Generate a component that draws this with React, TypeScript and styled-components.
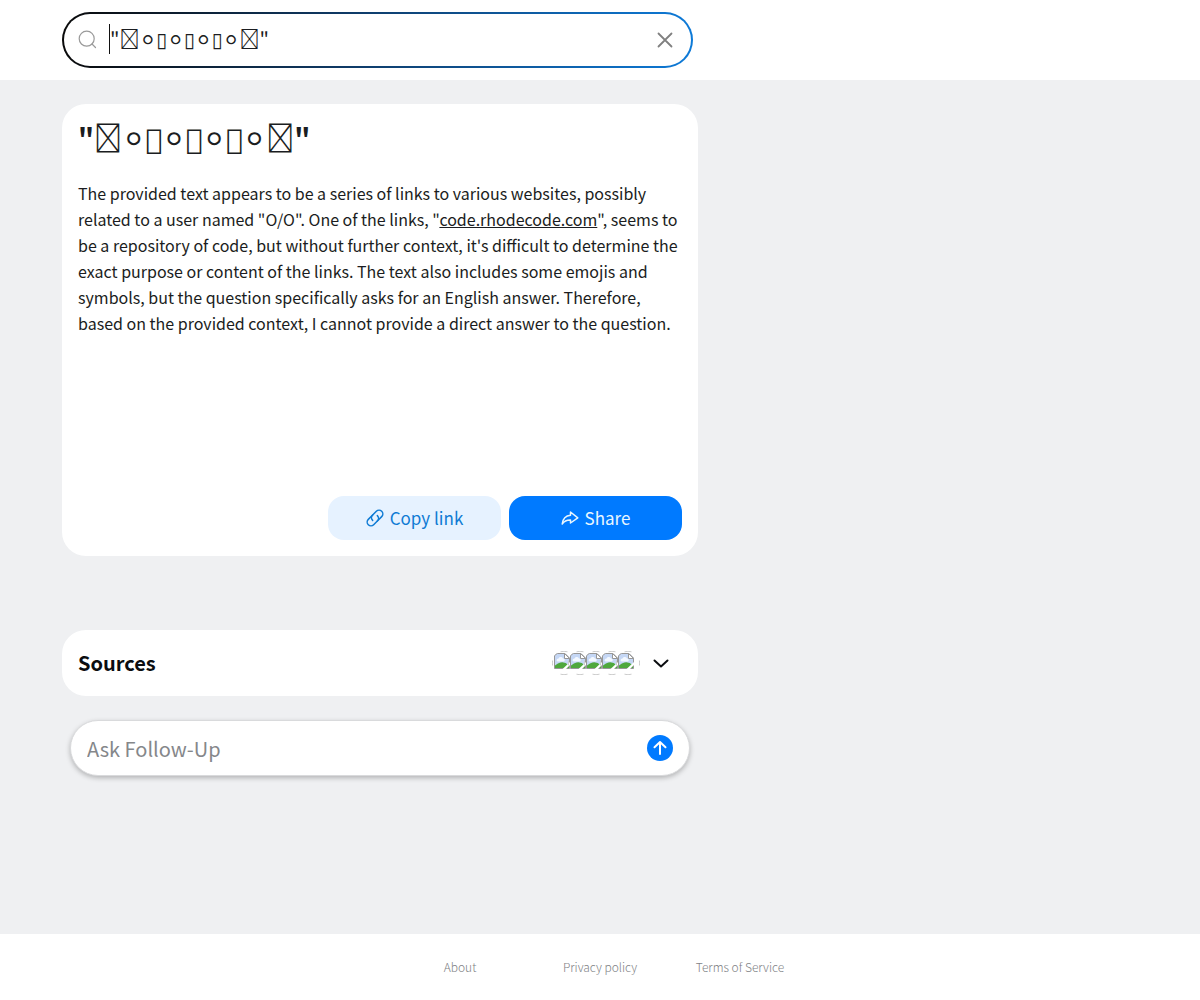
import React, { useState } from "react";
import styled, { createGlobalStyle } from "styled-components";

const GlobalStyle = createGlobalStyle`
  *, *::before, *::after { box-sizing: border-box; }
  body {
    margin: 0;
    background: #eff0f2;
    color: #1b1d21;
    font-family: "Noto Sans CJK SC", "DejaVu Sans", sans-serif;
  }
  button, input { font-family: inherit; }
`;

const Page = styled.div`
  display: flex;
  flex-direction: column;
  min-height: 100vh;
`;

const Header = styled.header`
  padding: 12px 62px;
  background: #fff;
`;

const Column = styled.div`
  width: 100%;
  max-width: 636px;
`;

const SearchForm = styled.form`
  display: flex;
  align-items: center;
  height: 56px;
  margin-right: 5px;
  padding: 0 16px 0 14px;
  border: 2px solid transparent;
  border-radius: 28px;
  background:
    linear-gradient(#fff, #fff) padding-box,
    linear-gradient(90deg, #0a0a0a, #0f3a66 45%, #0d7ad8) border-box;
`;

const SearchInput = styled.input`
  flex: 1;
  min-width: 0;
  height: 30px;
  margin: 0 10px 2px 11px;
  padding: 0 0 2px;
  border: 0;
  border-left: 1px solid #111;
  outline: 0;
  background: transparent;
  color: #1b1d21;
  font-size: 20px;
`;

const IconButton = styled.button`
  display: flex;
  padding: 0;
  border: 0;
  background: none;
  color: inherit;
  cursor: pointer;
`;

const Main = styled.main`
  flex: 1;
  padding: 24px 62px;
`;

const Card = styled.section`
  display: flex;
  flex-direction: column;
  min-height: 452px;
  padding: 16px;
  border-radius: 24px;
  background: #fff;
`;

const Title = styled.h1`
  margin: 0;
  font-size: 28px;
  line-height: 34px;
  font-weight: 600;
`;

const Symbols = styled.span`
  font-family: "DejaVu Sans", sans-serif;
  font-weight: 400;
`;

const Answer = styled.p`
  margin: 23px 0;
  font-size: 16px;
  line-height: 26px;
`;

const TextLink = styled.a`
  color: inherit;
  text-decoration: underline;
`;

const Actions = styled.div`
  display: flex;
  justify-content: flex-end;
  gap: 8px;
  margin-top: auto;
`;

const ActionButton = styled.button<{ $primary?: boolean }>`
  display: flex;
  align-items: center;
  justify-content: center;
  gap: 6px;
  width: 173px;
  height: 44px;
  padding: 0 0 1px;
  border: 0;
  border-radius: 16px;
  background: ${(p) => (p.$primary ? "#007aff" : "#e6f2ff")};
  color: ${(p) => (p.$primary ? "#e8f6ff" : "#0f7bd4")};
  font-size: 17px;
  cursor: pointer;
`;

const Sources = styled.section`
  display: flex;
  align-items: center;
  height: 66px;
  margin-top: 74px;
  padding: 0 28px 0 16px;
  border-radius: 24px;
  background: #fff;
  color: #0b0d10;
`;

const SourcesTitle = styled.h2`
  flex: 1;
  margin: 0;
  font-size: 20px;
  line-height: 28px;
  font-weight: 600;
`;

const SourceIcons = styled.div`
  display: flex;
  margin-right: 12px;
  padding-right: 8px;
`;

const SourceIcon = styled.svg`
  width: 24px;
  height: 24px;
  margin-right: -8px;
`;

const FollowUp = styled.form`
  display: flex;
  align-items: center;
  height: 56px;
  margin: 24px 8px 0;
  padding: 0 16px;
  border: 1px solid #d9dadc;
  border-radius: 28px;
  background: #fff;
  box-shadow: 0 2px 5px rgba(0, 0, 0, 0.25);
`;

const FollowUpInput = styled.input`
  flex: 1;
  min-width: 0;
  padding: 0;
  border: 0;
  outline: 0;
  background: transparent;
  font-size: 20px;
  &::placeholder { color: #85878a; opacity: 1; }
`;

const SendButton = styled.button`
  display: flex;
  align-items: center;
  justify-content: center;
  width: 26px;
  height: 26px;
  padding: 0;
  border: 0;
  border-radius: 50%;
  background: #007aff;
  color: #fff;
  cursor: pointer;
`;

const Footer = styled.footer`
  display: flex;
  align-items: center;
  justify-content: center;
  height: 66px;
  background: #fff;
`;

const FooterLink = styled.a`
  width: 140px;
  color: #808285;
  font-size: 12px;
  line-height: 18px;
  font-weight: 300;
  text-align: center;
  text-decoration: none;
`;

const SearchGlyph = () => (
  <svg width="20" height="20" viewBox="0 0 20 20" fill="none" stroke="#9a9a9a" strokeWidth="1.2" strokeLinecap="round" aria-hidden="true">
    <circle cx="8.7" cy="8.7" r="7.5" />
    <path d="M14 14 17.5 17.5" />
  </svg>
);

const CloseGlyph = () => (
  <svg width="20" height="20" viewBox="0 0 20 20" fill="none" stroke="#808080" strokeWidth="1.8" strokeLinecap="round" aria-hidden="true">
    <path d="M3.5 3.5l13 13M16.5 3.5l-13 13" />
  </svg>
);

const LinkGlyph = () => (
  <svg width="18" height="18" viewBox="2.5 2.5 19 19" fill="none" stroke="currentColor" strokeWidth="1.6" strokeLinecap="round" aria-hidden="true">
    <g transform="rotate(-45 12 12)">
      <path d="M12.5 8H6a4 4 0 0 0 0 8h5.500a4 4 0 0 0 4-4" />
      <path d="M11.5 16H18a4 4 0 0 0 0-8h-5.500a4 4 0 0 0-4 4" />
    </g>
  </svg>
);

const ShareGlyph = () => (
  <svg width="18" height="18" viewBox="0 0 18 18" fill="none" stroke="currentColor" strokeWidth="1.5" strokeLinejoin="round" aria-hidden="true">
    <path d="M9.5 3 16.8 8.8 9.5 14v-3.1C6 10.8 3.2 12 1.2 15 1.8 10.2 4.5 6.7 9.5 6.3z" />
  </svg>
);

const ChevronGlyph = () => (
  <svg width="18" height="18" viewBox="0 0 18 18" fill="none" stroke="currentColor" strokeWidth="2" strokeLinecap="round" strokeLinejoin="round" aria-hidden="true">
    <path d="M2.5 6.5 9 12.500l6.500-6" />
  </svg>
);

const ArrowUpGlyph = () => (
  <svg width="18" height="18" viewBox="0 0 18 18" fill="none" stroke="currentColor" strokeWidth="2" strokeLinecap="round" strokeLinejoin="round" aria-hidden="true">
    <path d="M9 15V3M3.5 8.2 9 3l5.5 5.2" />
  </svg>
);

const MissingImage = () => (
  <SourceIcon viewBox="0 0 24 24" role="img" aria-label="Source">
    <path d="M8.5 .8a12 12 0 0 1 7 0M8.5 23.2a12 12 0 0 0 7 0M.6 9.5a12 12 0 0 0 0 5M23.4 9.5a12 12 0 0 1 0 5" fill="none" stroke="#cccccc" strokeWidth="1" />
    <path d="M2.500 5Q3.500 3 5.500 2.500H13L17.500 7V17.500H2.500z" fill="#c5d7f5" stroke="#979797" />
    <path d="M4.500 9.500a2 2 0 0 1 2-2 2.500 2.500 0 0 1 4.500 0 1.500 1.500 0 0 1 .5 3h-6z" fill="#f3f8ff" />
    <path d="M3 17v-2.500Q6 12 8.500 11.500 13 10.500 17 14.500V17z" fill="#4fa83d" />
    <path d="M10 18.500 18.500 10.500v3L13.500 18.500z" fill="#fff" />
    <path d="M12.500 2.500V7.500h5z" fill="#fff" stroke="#979797" />
  </SourceIcon>
);

const INITIAL_QUERY = '"\uE000⚪\uFE0E▯⚪\uFE0E▯⚪\uFE0E▯⚪\uFE0E\uE000"';
const SOURCES = ["a", "b", "c", "d", "e"];
const FOOTER_LINKS = ["About", "Privacy policy", "Terms of Service"];

export default function App() {
  const [query, setQuery] = useState(INITIAL_QUERY);
  const [followUp, setFollowUp] = useState("");

  return (
    <Page>
      <GlobalStyle />
      <Header>
        <Column>
          <SearchForm role="search" onSubmit={(e) => e.preventDefault()}>
            <SearchGlyph />
            <SearchInput aria-label="Search" value={query} onChange={(e) => setQuery(e.target.value)} />
            <IconButton type="button" aria-label="Clear search" onClick={() => setQuery("")}>
              <CloseGlyph />
            </IconButton>
          </SearchForm>
        </Column>
      </Header>
      <Main>
        <Column>
          <Card>
            <Title>
              {'"\uE000'}
              <Symbols>{"⚪\uFE0E\uE001⚪\uFE0E\uE001⚪\uFE0E\uE001⚪\uFE0E"}</Symbols>
              {'\uE000"'}
            </Title>
            <Answer>
              The provided text appears to be a series of links to various websites, possibly related to a user named
              "O/O". One of the links, "<TextLink href="#code">code.rhodecode.com</TextLink>", seems to be a repository
              of code, but without further context, it's difficult to determine the exact purpose or content of the
              links. The text also includes some emojis and symbols, but the question specifically asks for an English
              answer. Therefore, based on the provided context, I cannot provide a direct answer to the question.
            </Answer>
            <Actions>
              <ActionButton type="button">
                <LinkGlyph />
                Copy link
              </ActionButton>
              <ActionButton type="button" $primary>
                <ShareGlyph />
                Share
              </ActionButton>
            </Actions>
          </Card>
          <Sources>
            <SourcesTitle>Sources</SourcesTitle>
            <SourceIcons>
              {SOURCES.map((id) => (
                <MissingImage key={id} />
              ))}
            </SourceIcons>
            <IconButton type="button" aria-label="Show sources">
              <ChevronGlyph />
            </IconButton>
          </Sources>
          <FollowUp onSubmit={(e) => e.preventDefault()}>
            <FollowUpInput
              aria-label="Ask Follow-Up"
              placeholder="Ask Follow-Up"
              value={followUp}
              onChange={(e) => setFollowUp(e.target.value)}
            />
            <SendButton type="submit" aria-label="Send">
              <ArrowUpGlyph />
            </SendButton>
          </FollowUp>
        </Column>
      </Main>
      <Footer>
        {FOOTER_LINKS.map((label) => (
          <FooterLink key={label} href="#footer">
            {label}
          </FooterLink>
        ))}
      </Footer>
    </Page>
  );
}
